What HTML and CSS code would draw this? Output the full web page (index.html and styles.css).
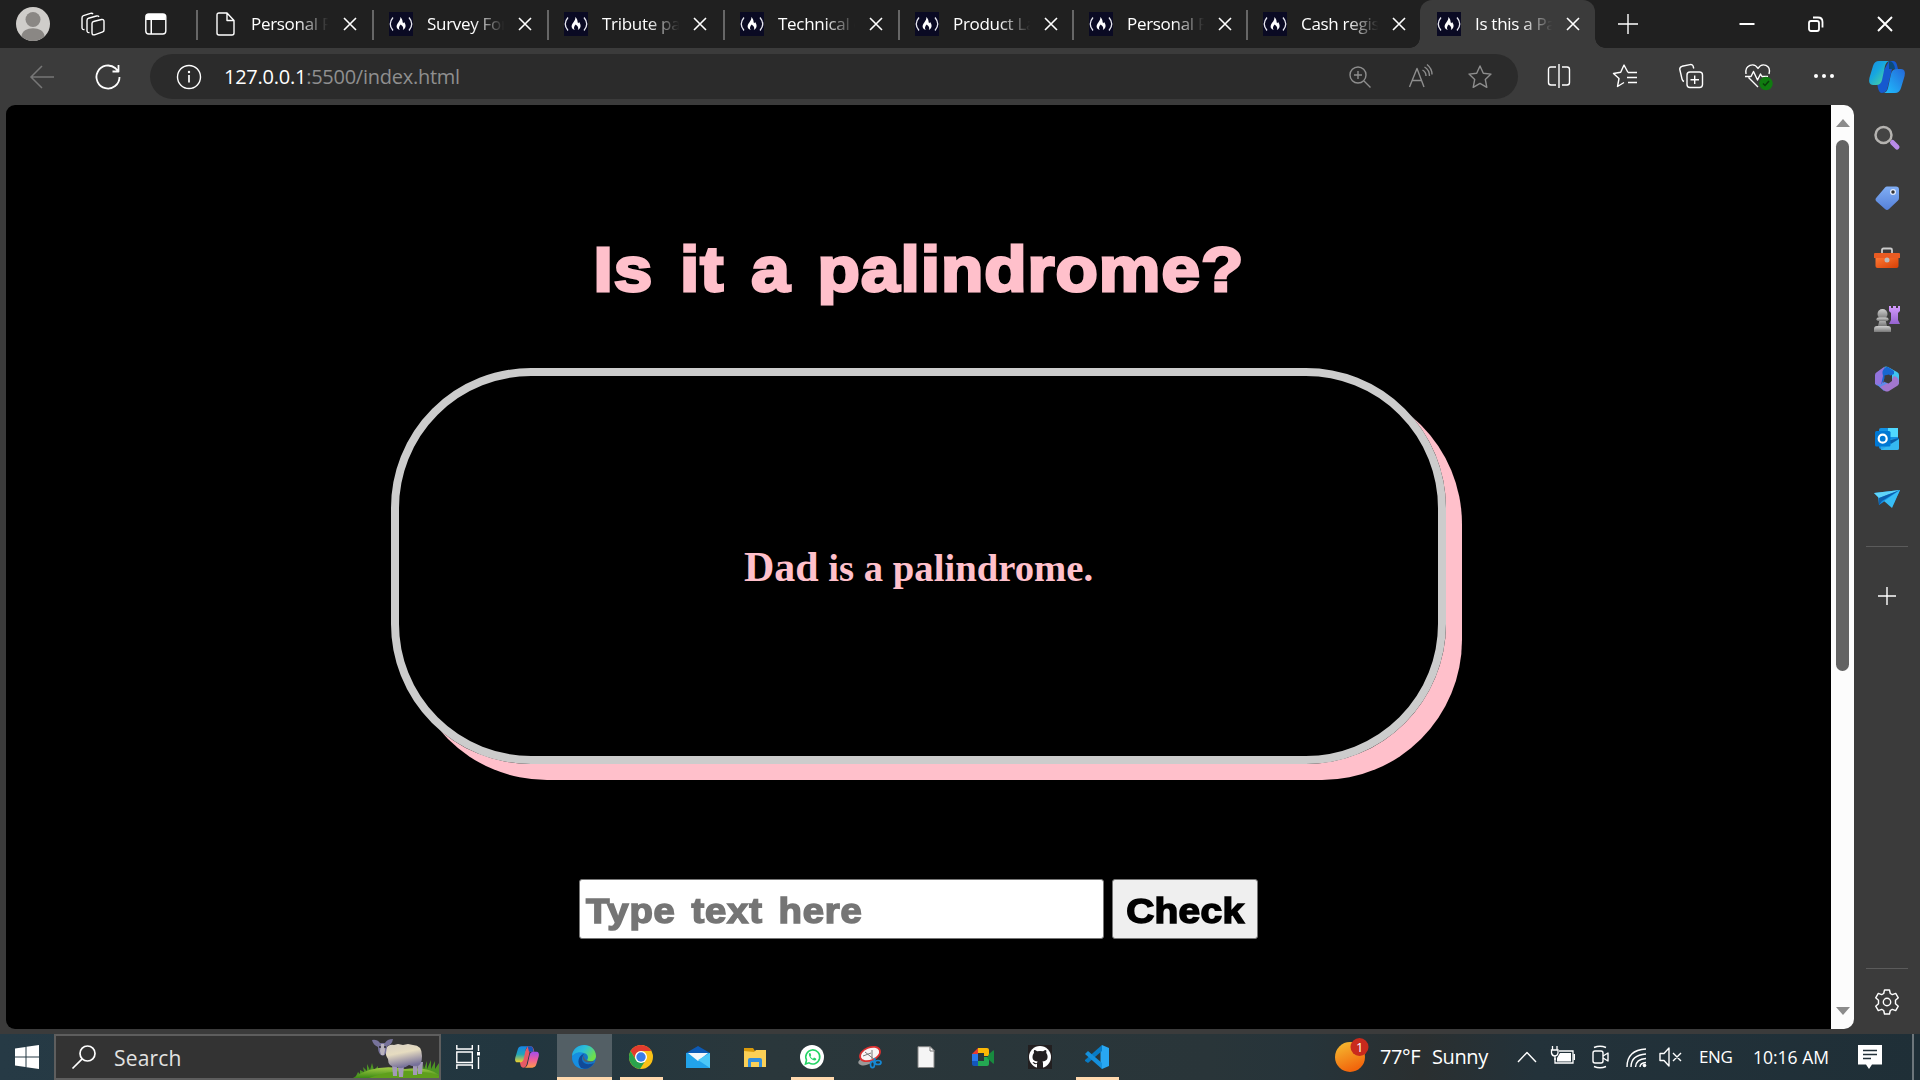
FILE: index.html
```html
<!DOCTYPE html>
<html lang="en">
<head>
<meta charset="utf-8">
<title>Is this a Palindrome?</title>
<link rel="stylesheet" href="styles.css">
</head>
<body>
<svg class="defs" aria-hidden="true">
  <defs>
    <linearGradient id="cyan" x1="0" y1="0" x2="1" y2="1"><stop offset="0" stop-color="#1a8be0"/><stop offset=".4" stop-color="#16a6e0"/><stop offset="1" stop-color="#5be08a"/></linearGradient>
    <linearGradient id="blue" x1="0" y1="1" x2="1" y2="0"><stop offset="0" stop-color="#1fc0ff"/><stop offset="1" stop-color="#2467d8"/></linearGradient>
    <linearGradient id="rainbow" x1="0" y1="0" x2="0" y2="1"><stop offset="0" stop-color="#1684e8"/><stop offset=".5" stop-color="#22a6b8"/><stop offset="1" stop-color="#f5d327"/></linearGradient>
    <linearGradient id="warm" x1="0" y1="0" x2="0" y2="1"><stop offset="0" stop-color="#a04df0"/><stop offset=".5" stop-color="#ee5c9c"/><stop offset="1" stop-color="#ff9a4a"/></linearGradient>
    <linearGradient id="tag" x1="0" y1="0" x2="0" y2="1"><stop offset="0" stop-color="#80aef5"/><stop offset="1" stop-color="#5580d8"/></linearGradient>
    <linearGradient id="orange" x1="0" y1="0" x2="1" y2="1"><stop offset="0" stop-color="#ff7a35"/><stop offset="1" stop-color="#d63f05"/></linearGradient>
    <linearGradient id="sun" x1="0" y1="0" x2=".4" y2="1"><stop offset="0" stop-color="#f5c033"/><stop offset="1" stop-color="#f2660c"/></linearGradient>
    <linearGradient id="grey" x1="0" y1="0" x2="0" y2="1"><stop offset="0" stop-color="#cfcfcf"/><stop offset="1" stop-color="#777"/></linearGradient>
    <linearGradient id="purple" x1="0" y1="0" x2="0" y2="1"><stop offset="0" stop-color="#d59cff"/><stop offset="1" stop-color="#9563d0"/></linearGradient>
    <linearGradient id="wool" x1="0" y1="0" x2=".3" y2="1"><stop offset="0" stop-color="#d8d0c4"/><stop offset=".45" stop-color="#e6dcc0"/><stop offset="1" stop-color="#77719a"/></linearGradient>
    <linearGradient id="grass" x1="0" y1="0" x2="0" y2="1"><stop offset="0" stop-color="#a4cc45"/><stop offset="1" stop-color="#3b8a14"/></linearGradient>
    <linearGradient id="edge" x1="0" y1="0" x2="1" y2=".5"><stop offset="0" stop-color="#1f9fe0"/><stop offset=".5" stop-color="#2dc0d8"/><stop offset="1" stop-color="#6fe04a"/></linearGradient>
    <symbol id="fcc" viewBox="0 0 24 24"><rect width="24" height="24" fill="#0a0a23"/><path d="M4 5.500Q-1.500 12 4 18.500M20 5.500q5.500 6.500 0 13" fill="none" stroke="#e8e8f0" stroke-width="1.300"/><path d="M11.300 5c3 3 1.700 4.500 3 6.300l.8-1.300c2.300 3 2 6.500-1.300 8 .9-2 .2-3.200-.8-4.300l-1.300-1.200c-1.600 1.700-2.400 3.500-1 5.500-4.300-1.600-3.400-5-1.400-7.500 1.500-2 2.300-3.200 2-5.500z" fill="#fff"/></symbol>
    <symbol id="x" viewBox="0 0 14 14"><path d="M1 1l12 12M13 1L1 13" fill="none" stroke="#fff" stroke-width="1.600"/></symbol>
  </defs>
</svg>

<div class="browser">
  <header class="tabstrip">
    <div class="tab-tools">
      <svg class="avatar" viewBox="0 0 34 34"><circle cx="17" cy="17" r="17" fill="#cfcdca"/><circle cx="17" cy="12.500" r="7.500" fill="#8a8784"/><path d="M5.500 29.500c0-11 23-11 23 0a17 17 0 0 1-23 0z" fill="#8a8784"/></svg>
      <svg class="i24" viewBox="0 0 24 24"><g class="line"><path d="M12.500 9.500l8-2q2.500-.4 2.500 2v8.500q0 1.500-1.200 1.800l-8.300 3q-2.500.6-2.500-2V11.500q0-1.700 1.500-2z"/><path d="M8.500 20.500Q6 21 6 18.500V8.500Q6 6.700 7.500 6.300l8-2.300q1.800-.4 2.500.8"/><path d="M3.500 17.500Q1 18 1 15.500V6q0-1.800 1.500-2.300l7-2.300q1.800-.4 2.500.6"/></g></svg>
      <svg class="i24" viewBox="0 0 24 24"><rect x="1.800" y="2" width="20" height="20" rx="3" class="line"/><path d="M2 8V4q0-2 2-2h15.500q2 0 2 2v4zM6.500 8h1.500v14H6.500z" fill="#fff"/></svg>
    </div>
    <nav class="tabs">
      <div class="tab"><svg class="i24" viewBox="0 0 24 24"><path class="line" d="M6 1h8l7 7.500V21q0 2-2 2H6q-2 0-2-2V3q0-2 2-2zM14 1v7.500h7"/></svg><span class="tab-title">Personal P</span><svg class="close"><use href="#x"/></svg></div>
      <div class="tab"><svg class="i24"><use href="#fcc"/></svg><span class="tab-title">Survey For</span><svg class="close"><use href="#x"/></svg></div>
      <div class="tab"><svg class="i24"><use href="#fcc"/></svg><span class="tab-title">Tribute pa</span><svg class="close"><use href="#x"/></svg></div>
      <div class="tab"><svg class="i24"><use href="#fcc"/></svg><span class="tab-title">Technical d</span><svg class="close"><use href="#x"/></svg></div>
      <div class="tab"><svg class="i24"><use href="#fcc"/></svg><span class="tab-title">Product La</span><svg class="close"><use href="#x"/></svg></div>
      <div class="tab"><svg class="i24"><use href="#fcc"/></svg><span class="tab-title">Personal P</span><svg class="close"><use href="#x"/></svg></div>
      <div class="tab"><svg class="i24"><use href="#fcc"/></svg><span class="tab-title">Cash regis</span><svg class="close"><use href="#x"/></svg></div>
      <div class="tab active"><svg class="i24"><use href="#fcc"/></svg><span class="tab-title">Is this a Pa</span><svg class="close"><use href="#x"/></svg></div>
    </nav>
    <svg class="newtab" viewBox="0 0 22 22"><path class="line" d="M11 1v20M1 11h20"/></svg>
    <div class="window-buttons">
      <svg class="i24" viewBox="0 0 24 24"><path d="M4.500 12h15" stroke="#fff" stroke-width="2"/></svg>
      <svg class="i24" viewBox="0 0 24 24"><g fill="none" stroke="#fff" stroke-width="1.800"><rect x="5" y="9" width="10" height="10" rx="2"/><path d="M9 5.500h5q4.500 0 4.500 4.500v5.500"/></g></svg>
      <svg class="i24" viewBox="0 0 24 24"><path d="M5 5l14 14M19 5L5 19" stroke="#fff" stroke-width="1.900"/></svg>
    </div>
  </header>

  <div class="toolbar">
    <svg class="i26 back" viewBox="0 0 26 26"><path d="M25 13H2M13 2L2 13l11 11" fill="none" stroke="#777" stroke-width="1.500"/></svg>
    <svg class="i26" viewBox="0 0 26 26"><path class="line thick" d="M24.500 13a11.500 11.500 0 1 1-4-8.700l2.500 2.500M23.500 1v6.500h-6"/></svg>
    <div class="address">
      <svg class="i26" viewBox="0 0 26 26"><circle cx="13" cy="13" r="11.500" class="line"/><path d="M13 11v7.500" stroke="#fff" stroke-width="1.700"/><circle cx="13" cy="8" r="1.200" fill="#fff"/></svg>
      <span class="url"><b>127.0.0.1</b>:5500/index.html</span>
      <div class="address-icons">
        <svg class="i24" viewBox="0 0 24 24"><g class="dim"><circle cx="10" cy="10" r="8"/><path d="M16 16l6.500 6.500M10 6v8M6 10h8"/></g></svg>
        <svg class="i24" viewBox="0 0 24 24"><g class="dim"><path d="M1.500 22L9 3.500l7 18.500M4.500 15.500h9M14.500 5q3.500 2 3.500 6M16.500 2q5 3 5 9M19-.5q5 4 5 10"/></g></svg>
        <svg class="i24" viewBox="0 0 24 24"><path class="dim" d="M12 1l3.300 7.200 7.700.9-5.700 5.300 1.500 7.900-6.800-3.900-6.800 3.900 1.500-7.900L1 9.100l7.700-.9z"/></svg>
      </div>
    </div>
    <div class="tools">
      <svg class="i24" viewBox="0 0 24 24"><path class="line" d="M9 3H4Q1.500 3 1.500 5.500v13Q1.500 21 4 21h5M15 3h5q2.500 0 2.500 2.500v13Q22.500 21 20 21h-5M12 0v24"/></svg>
      <svg class="i24" viewBox="0 0 24 24"><path class="line" d="M15 8.500L11 1 7.700 8.200.5 9.500l5.500 5-1.500 8 6.500-4M15 8.500h9M14 13.500h10M15 18.500h9"/></svg>
      <svg class="i24" viewBox="0 0 24 24"><g class="line"><rect x="8" y="8" width="15.500" height="15.500" rx="3"/><path d="M15.700 11.500v8.500M11.500 15.700H20M5 17.500Q3.500 17 3 15L.8 5.500Q.5 3 3 2.300L11 .6q3-.4 3.300 2.400l.5 1.500"/></g></svg>
      <svg class="heart" viewBox="0 0 28 26"><path class="line" d="M1 10C-.5 1 9-2 13 4.500 17-2 26.500 1 24 10M3.500 13.500L13 23M0 12.500h6l2.500-5 4 8.500 3-6 1.500 2.500h6"/><circle cx="21" cy="19.500" r="6.700" fill="#107c10"/><path d="M18 19.500l2 2 4-4.500" fill="none" stroke="#0a3d0a" stroke-width="1.500"/></svg>
      <svg class="i24" viewBox="0 0 24 24"><g fill="#fff"><circle cx="4" cy="12" r="2"/><circle cx="12" cy="12" r="2"/><circle cx="20" cy="12" r="2"/></g></svg>
    </div>
    <svg class="copilot" viewBox="0 0 36 32"><path d="M20 0h4q3 0 4 4l1 4h-6l-4 17q-1 7-6 7-3 0-4-5l-1-5z" fill="#1659cf"/><path d="M20 0q5 0 6 8h-6z" fill="#0c4a78"/><path d="M10 0h10q-3 1-4 5l-3 14q-1 5-6 5H4q-5 0-3.600-7L4 5Q5.500 0 10 0z" fill="url(#cyan)"/><path d="M26 32H15q3-1 4-5l3-14q1-5 6-5h4q5 0 3.600 7L32 27q-1.500 5-6 5z" fill="url(#blue)"/></svg>
  </div>

  <div class="content">
    <main class="page">
      <h1 class="title"><span>Is it a palindrome?</span></h1>
      <section class="result"><p><span class="word">Dad</span> is a palindrome.</p></section>
      <form class="form">
        <div class="field"><span>Type text here</span></div>
        <div class="button"><span>Check</span></div>
      </form>
    </main>
    <div class="scrollbar"><i class="arrow up"></i><i class="thumb"></i><i class="arrow down"></i></div>
    <aside class="sidebar">
      <svg viewBox="0 0 26 26"><path d="M18.500 17.500l4.500 4.500" stroke="#b98be8" stroke-width="5" stroke-linecap="round"/><circle cx="9.500" cy="10" r="8" fill="#444" stroke="#b5b3b0" stroke-width="2.500"/></svg>
      <svg viewBox="0 0 26 26"><path d="M13 1.500h9q3 0 3 3v8.500q0 1.500-1 2.500L15 24q-2 2-4 0l-8.500-7.500q-2-2 0-4L11 2.500q.8-1 2-1z" fill="url(#tag)"/><circle cx="19" cy="7" r="2.400" fill="#333" stroke="#e4edff" stroke-width="1.300"/></svg>
      <svg viewBox="0 0 26 26"><path d="M8 8V5q0-1.500 1.500-1.500h7Q18 3.500 18 5v3" fill="none" stroke="#ccc" stroke-width="1.800"/><path d="M1.500 12h23v9q0 2-2 2h-19q-2 0-2-2z" fill="url(#orange)"/><path d="M1 8h24q1 0 1 1v4H0V9q0-1 1-1z" fill="#e85b22"/><circle cx="13" cy="15" r="2.500" fill="#bbb"/></svg>
      <svg viewBox="0 0 26 26"><path d="M15 0h2v2h2V0h3v2h2V0h2v5l-2 2v7l2 4H15l2-4V7l-2-2z" fill="url(#purple)"/><g fill="url(#grey)"><path d="M6 12h5l2 8H4z"/><circle cx="8.500" cy="8" r="5"/><rect x="2.500" y="11.500" width="12" height="3.500" rx="1.700"/><path d="M0 26v-3q0-3 3-3h11q3 0 3 3v3z"/></g></svg>
      <svg viewBox="0 0 26 26"><path d="M10 1q2-1 4 0l9 5q2 1 2 3v9l-7-3V9z" fill="#3fc4f0"/><path d="M10 1l6 6-6 3-1 9q-6 2-8-1V9q0-2 2-3z" fill="#9273dc"/><path d="M14 1h-2q-5 3-3 9l-2 9 4-7 9-4V5z" fill="#1767cf"/><path d="M1 17q5 4 9-1l8-4v6l-8 7z" fill="#5a8bea"/><path d="M25 16q0 3-2 4l-8 5q-2 1-4 0l-5-4 10-5 4-6q5 1 5 6z" fill="#a276ce"/><path d="M10.500 9.500l4.500-1 3 3v3.500l-3.500 2.500-4-1.500z" fill="#3b3b3b"/></svg>
      <svg viewBox="0 0 26 26"><rect x="5" y="2" width="19" height="21" rx="2" fill="#1391e4"/><path d="M14 2h10v9H14z" fill="#50d9ff"/><path d="M6 13h19v9q0 2-2 2H7z" fill="#28a8ea"/><path d="M25 12v10L12 15z" fill="#0a5ea8"/><path d="M25 13v9q0 2-2 2H7l18-11z" fill="#35b8f1"/><rect x="1" y="5" width="15.500" height="15.500" rx="1.500" fill="#0078d4"/><circle cx="8.700" cy="12.700" r="4" fill="none" stroke="#fff" stroke-width="2.200"/></svg>
      <svg viewBox="0 0 26 26"><path d="M0 7l26-3-8 17-7-6-6 4-1-8z" fill="#1593e6"/><path d="M0 7l26-3L5 12z" fill="#5fd5fa"/><path d="M5 12L26 4 8 15l-3 4z" fill="#0c5fae"/><path d="M26 4l-8 18-8-7z" fill="#38bdf5"/></svg>
      <i class="rule"></i>
      <svg class="plus" viewBox="0 0 22 22"><path class="line" d="M11 2v18M2 11h18"/></svg>
      <i class="rule bottom"></i>
      <svg class="gear" viewBox="0 0 26 26"><path class="line" d="M10.500 1h5l.8 3.500 2 1.100 3.400-1.200 2.600 4.400-2.800 2.500v3.400l2.800 2.500-2.600 4.400-3.400-1.200-2 1.100-.8 3.500h-5l-.8-3.500-2-1.100-3.400 1.200-2.600-4.400 2.800-2.500v-3.400L1.700 8.800l2.600-4.400 3.400 1.200 2-1.100z"/><circle cx="13" cy="13" r="3.700" class="line"/></svg>
    </aside>
  </div>
</div>

<footer class="taskbar">
  <div class="start"><svg viewBox="0 0 24 24"><path fill="#fff" d="M0 3.500L10.500 2v9.500H0zM11.500 1.800L24 0v11.500H11.500zM0 12.500h10.500V22L0 20.500zM11.500 12.500H24V24l-12.500-1.800z"/></svg></div>
  <div class="search">
    <svg class="i24" viewBox="0 0 24 24"><circle cx="15.500" cy="8.500" r="7.500" fill="none" stroke="#fff" stroke-width="1.700"/><path d="M10.200 13.800L.5 23.500" stroke="#fff" stroke-width="1.700"/></svg>
    <span>Search</span>
    <svg class="sheep" viewBox="0 0 88 42"><path d="M4 42l3-6 2 2 0-4 4 2-1-5 4 4 0-7 3 6 2-7 2 7 4-4v12zM70 36l2-8 1 5 3-8 0 8 4-9 0 9 4-8 0 8 4-6v15H70z" fill="#4d9424"/><path d="M2 42Q24 27 54 33q22-3 34 6v3z" fill="url(#grass)"/><path d="M18 42q26-11 62-5l8 3v2z" fill="#5f9f1c"/><path d="M41 28h5v12h-4zM47 29h6l-1 12h-4zM62 27h5l-1 12h-4zM67 26h5l-1 12h-4z" fill="#a39ab6"/><path d="M35 13q2-5 8-4l4-1 5 1 5-1 5 1q9 0 9 11 0 8-4 10-5 1-9-1-6 5-13 2-8 0-8-8-3-4-2-10z" fill="url(#wool)"/><path d="M21 4q5-1 8 3l5 0q2-4 8-4-1 6-6 7l-1 7q-2 4-5 2-3-2-3-8-5-2-6-7z" fill="#77739b"/><path d="M30 8h3l1 6-1 5h-3l-1-4z" fill="#b9b3bd"/><circle cx="29" cy="11" r=".9" fill="#222"/><circle cx="34" cy="11" r=".9" fill="#222"/></svg>
  </div>
  <div class="apps">
    <div class="app task"><svg viewBox="0 0 24 24"><path d="M.8 0v4h15.500V0M.8 24v-4h15.500v4M.8 7h15.500v10.500H.8zM22.500 0v6M22.500 12v12" fill="none" stroke="#fff" stroke-width="1.400"/><path fill="#fff" d="M21 7h3v3.500h-3z"/></svg></div>
    <div class="app"><svg viewBox="0 0 36 34"><path d="M19 1h5q3 0 4 4l1 4h-7l-4 17q-1 7-6 7-3 0-4-5l-1-5z" fill="#e85a64"/><path d="M19 1h5q3 0 4 8h-7z" fill="#1757b8"/><path d="M10 1h10q-3 1-4 5l-3 14q-1 5-6 5H4q-5 0-3.600-7L4 6q1.500-5 6-5z" fill="url(#rainbow)"/><path d="M26 33H15q3-1 4-5l3-14q1-5 6-5h4q5 0 3.600 7L32 28q-1.500 5-6 5z" fill="url(#warm)"/></svg></div>
    <div class="app current"><svg viewBox="0 0 24 24"><circle cx="12" cy="12" r="12" fill="#1375c8"/><path d="M0 11C1-3 23-4 24 11c0 6-8 7-9 4 2-2 1-7-4-7-6 0-9 2-11 3z" fill="url(#edge)"/><path d="M8 15c0-4 2-7 4-7-6-2-11 1-12 4 0 7 5 12 12 12-3-2-4-5-4-9z" fill="#168ee0"/><path d="M12 9c-5 6 0 13 10 9-3 5-8 7-13 5-5-6-2-13 3-14z" fill="#114a98"/><path d="M12.500 10c-1.500 3 .5 7 9.500 6-5 3-11 1-11-3 0-1 .7-2 1.500-3z" fill="#536068"/></svg></div>
    <div class="app open"><svg viewBox="0 0 24 24"><circle cx="12" cy="12" r="12" fill="#fbc116"/><path d="M1.600 6A12 12 0 0 1 22.400 6H12a6 6 0 0 0-5.500 8z" fill="#e33b2e"/><path d="M1.600 6A12 12 0 0 0 11 24l5.500-8.500A6 6 0 0 1 7 15z" fill="#2ba24c"/><circle cx="12" cy="12" r="6" fill="#fff"/><circle cx="12" cy="12" r="4.700" fill="#3a7de8"/></svg></div>
    <div class="app"><svg viewBox="0 0 24 24"><path d="M0 8l12-7 12 7v5H0z" fill="#0d5ab5"/><path d="M0 8h24v15H0z" fill="#22a3ea"/><path d="M2 8h20L12 16z" fill="#f5f7fa"/><path d="M24 8v15L12 15z" fill="#4cc8f8"/></svg></div>
    <div class="app"><svg viewBox="0 0 24 24"><path d="M1 3h9l2 3v3H1z" fill="#d99a0b"/><path d="M1 6l10 1 2-2h10v17H1z" fill="#fbd056"/><path d="M5 22v-7q0-2 2-2h10q2 0 2 2v7h-3v-5H8v5z" fill="#338edb"/></svg></div>
    <div class="app open"><svg viewBox="0 0 24 24"><circle cx="12" cy="12" r="12" fill="#fff"/><path d="M5.500 19l1-4A7 7 0 1 1 9 17.800z" fill="none" stroke="#25d366" stroke-width="1.600"/><path d="M9.500 8c-2 1 1 7 5 7.500 2 0 2-1.500 1.500-2l-2-1-1 1.200c-1.500-.5-2-1.500-2.500-2.500l.7-1-.7-2z" fill="#25d366"/></svg></div>
    <div class="app"><svg viewBox="0 0 24 24"><ellipse cx="9" cy="16" rx="8" ry="4" fill="#999" transform="rotate(-15 9 16)"/><ellipse cx="13" cy="9" rx="10.500" ry="6.500" fill="#f8f5f5" stroke="#dc3030" stroke-width="1.800" transform="rotate(-22 13 9)"/><path d="M8 7l10 8M15 5v9M6 11l8-3" stroke="#777" fill="none"/><g fill="none" stroke="#1688d4" stroke-width="1.700"><ellipse cx="15.500" cy="19.500" rx="2" ry="3.200"/><ellipse cx="21" cy="17.500" rx="3" ry="2"/><path d="M18 13l-1 5"/></g></svg></div>
    <div class="app"><svg viewBox="0 0 24 24"><path d="M4 1.700h12l4 4V22.500H4z" fill="#f5f5f5" stroke="#888"/><path d="M16 1.500V6h4.500z" fill="#fff" stroke="#777"/></svg></div>
    <div class="app"><svg viewBox="0 0 24 24"><path d="M7 3h9q2 0 2 2v6h-5V8H7z" fill="#fbb806"/><path d="M7 3v6H1z" fill="#e53b30"/><path d="M1 9h6v7H1z" fill="#2978ec"/><path d="M1 16h6v5H3q-2 0-2-2z" fill="#1455bb"/><path d="M7 16h6v-4h5v7q0 2-2 2H7z" fill="#24a852"/><path d="M18 9l4-3.500q1-.7 1 .7v11.600q0 1.400-1 .7L16 13z" fill="#188a3f"/></svg></div>
    <div class="app"><svg viewBox="0 0 24 24"><rect width="24" height="24" fill="#221f20"/><circle cx="12" cy="12" r="11" fill="#fff"/><path d="M9 23v-4c-3 .7-3.500-1-4.500-2 2-.5 2 1.800 4.500 1l.6-1.500C2 16 5 8.500 6 8c-.4-1-.2-2 .1-3 1 0 2 .5 3 1.300q3-.7 6 0c1-.8 2-1.300 3-1.300.3 1 .5 2 .1 3 1 .5 4 8-3.700 8.500q.7 1 .5 2.500v4z" fill="#221f20"/></svg></div>
    <div class="app open"><svg viewBox="0 0 24 24"><path d="M17 0l7 3v18l-7 3-1.500-6V6z" fill="#28a7f2"/><path d="M17 0v6L3 18l-3-2v-1z" fill="#087bc4"/><path d="M0 9l3-3 14 12v6L0 9z" fill="#1590dc"/></svg></div>
  </div>
  <div class="tray">
    <svg class="weather" viewBox="0 0 34 34"><ellipse cx="15" cy="19" rx="15" ry="15" fill="url(#sun)"/><circle cx="24.500" cy="9" r="9" fill="#c92a1d"/><text x="24.500" y="14" text-anchor="middle" class="badge">1</text></svg>
    <span class="temp">77°F</span><span class="sunny">Sunny</span>
    <svg class="i24 chev" viewBox="0 0 24 24"><path class="line" d="M3 17l9-9.500 9 9.500"/></svg>
    <svg class="i24 batt" viewBox="0 0 24 24"><path d="M8 6h14v12H4v-5" fill="none" stroke="#fff" stroke-width="1.300"/><path d="M9 8h11v8.500H6V13zM22.500 9H24v6h-1.500z" fill="#fff"/><path d="M1.500 1v4M6 1v4M.5 5h6.500v3q-.5 3-3.200 3T.5 8zM4 11v4" stroke="#fff" fill="none" stroke-width="1.300"/></svg>
    <svg class="i24 cam" viewBox="0 0 24 24"><g class="line"><rect x="5" y="6" width="10" height="12" rx="2"/><path d="M15 11l5-3v8l-5-3M6 2.500q6-2.500 12 0M6 21.500q6 2.500 12 0"/></g></svg>
    <svg class="i24 wifi" viewBox="0 0 24 24"><path class="line" d="M3 22Q3 5 22 4M7 22Q7 10 22 9M11.500 22Q12 14 22 13.500M16 22q0-4 6-4.500"/><circle cx="20.500" cy="20.500" r="1.800" fill="#fff"/></svg>
    <svg class="i24 vol" viewBox="0 0 24 24"><path class="line" d="M2 8.500h4L11 3v18l-5-5.500H2zM15 8l8 8M23 8l-8 8"/></svg>
    <span class="lang">ENG</span><span class="clock">10:16 AM</span>
    <svg class="notif" viewBox="0 0 24 24"><path d="M0 0h24v19.500H14L11 24l-3-4.500H0z" fill="#fff"/><path d="M5 5.500h14M5 9.500h14M5 13.500h8" stroke="#223038" stroke-width="1.300"/></svg>
    <i class="desktop"></i>
  </div>
</footer>
</body>
</html>
```

FILE: styles.css
```css
* { box-sizing: border-box; }
body { margin: 0; width: 1920px; height: 1080px; overflow: hidden; background: #3b3b3b; font-family: "Open Sans", "Noto Sans", sans-serif; color: #fff; display: flex; flex-direction: column; }
svg { display: block; flex: none; overflow: visible; }
.defs { position: absolute; width: 0; height: 0; }
.line { fill: none; stroke: #fff; stroke-width: 1.400; stroke-linejoin: round; }
.thick { stroke-width: 1.800; }
.dim { fill: none; stroke: #8e8e8e; stroke-width: 1.400; stroke-linejoin: round; }
.i24 { width: 24px; height: 24px; }
.i26 { width: 26px; height: 26px; }

.browser { height: 1034px; display: flex; flex-direction: column; }
.tabstrip { height: 48px; background: #202020; display: flex; align-items: center; }
.tab-tools { width: 196px; padding-left: 16px; display: flex; align-items: center; }
.avatar { width: 34px; height: 34px; }
.avatar + svg { margin-left: 31px; }
.avatar + svg + svg { margin-left: 39px; }
.tabs { display: grid; grid-template-columns: 176px 175px 176px 175px 174px 174px 174px 175px; height: 48px; }
.tab { display: flex; align-items: center; padding-left: 17px; position: relative; background: linear-gradient(#666, #666) 0 10px / 2px 30px no-repeat; }
.tab-title { width: 79px; margin-left: 14px; font-size: 17px; letter-spacing: -.3px; line-height: 24px; white-space: nowrap; -webkit-mask-image: linear-gradient(90deg, #000 58%, transparent 98%); mask-image: linear-gradient(90deg, #000 58%, transparent 98%); }
.close { width: 14px; height: 14px; margin-left: 12px; }
.tab:first-child .close { margin-left: 13px; }
.tab.active { background: #3b3b3b; border-radius: 12px 12px 0 0; }
.tab.active::before, .tab.active::after { content: ""; position: absolute; bottom: 0; width: 10px; height: 10px; }
.tab.active::before { left: -10px; background: radial-gradient(circle at 0 0, transparent 9.5px, #3b3b3b 10px); }
.tab.active::after { right: -10px; background: radial-gradient(circle at 100% 0, transparent 9.5px, #3b3b3b 10px); }
.newtab { width: 22px; height: 22px; margin-left: 22px; }
.window-buttons { margin-left: auto; padding-right: 23px; display: flex; gap: 45px; }

.toolbar { height: 57px; display: flex; align-items: center; padding-left: 29px; }
.toolbar > .i26 { margin-right: 40px; }
.toolbar > .i26 + .i26 { margin-right: 29px; }
.address { width: 1368px; height: 45px; border-radius: 23px; background: #2b2b2b; display: flex; align-items: center; padding: 0 26px; }
.url { margin-left: 22px; font-size: 20px; letter-spacing: -.25px; line-height: 28px; color: #8f8f8f; }
.url b { font-weight: 400; color: #fff; }
.address-icons { margin-left: auto; display: flex; gap: 36px; }
.tools { display: flex; gap: 42px; margin-left: 29px; }
.heart { width: 28px; height: 26px; margin-right: -3px; }
.copilot { width: 36px; height: 32px; margin-left: 33px; margin-top: 1px; }

.content { height: 924px; display: flex; padding-left: 6px; }
.page { width: 1825px; background: #000; border-radius: 9px 0 0 9px; display: flex; flex-direction: column; align-items: center; }
.title { margin: 122px 0 0; height: 84px; font: 700 63px/84px "Liberation Sans", Arial, sans-serif; color: pink; white-space: nowrap; }
.title span, .field span, .button span { display: inline-block; }
.title span { transform: scaleX(1.1); -webkit-text-stroke: 2.800px pink; letter-spacing: .9px; word-spacing: 6px; }
.result { margin-top: 57px; width: 1055px; height: 396px; border: 8px solid #ccc; border-radius: 140px; box-shadow: 16px 16px 0 pink; display: flex; align-items: center; justify-content: center; }
.result p { margin: 0; padding-top: 2px; font: 700 38.700px/48px "Liberation Serif", "Times New Roman", serif; color: pink; }
.word { font-size: 42px; }
.form { margin-top: 115px; display: flex; gap: 8px; font: 700 34.500px/60px "Liberation Sans", Arial, sans-serif; }
.field, .button { height: 60px; border: 1px solid #767676; border-radius: 3px; white-space: nowrap; }
.field { width: 525px; background: #fff; color: #757575; padding: 1px 0 0 6px; }
.button { width: 146px; background: #efefef; color: #000; text-align: center; padding-top: 1px; }
.field span { transform: scaleX(1.11); transform-origin: 0 0; -webkit-text-stroke: 1.500px #757575; letter-spacing: .7px; word-spacing: 4px; }
.button span { transform: scaleX(1.13); -webkit-text-stroke: 1.500px #000; letter-spacing: .2px; }

.scrollbar { width: 23px; background: #fcfcfc; border-radius: 0 10px 10px 0; display: flex; flex-direction: column; align-items: center; padding: 14px 0; }
.arrow { width: 0; height: 0; border: 7.500px solid transparent; }
.up { border-top: 0; border-bottom: 8px solid #8b8b8b; }
.down { border-bottom: 0; border-top: 8px solid #8b8b8b; margin-top: auto; }
.thumb { width: 13px; height: 531px; margin-top: 13px; border-radius: 7px; background: #636363; }

.sidebar { width: 66px; display: flex; flex-direction: column; align-items: center; padding: 20px 0 14px; gap: 34.200px; }
.sidebar svg { width: 26px; height: 26px; }
.rule { width: 42px; height: 1px; background: #5b5b5b; }
.sidebar .plus { width: 22px; height: 22px; margin-top: 3px; }
.rule.bottom { margin-top: auto; margin-bottom: -14px; }

.taskbar { height: 46px; display: flex; background: linear-gradient(90deg, #263a45 0, #22363f 27%, #2a373b 40%, #293539 63%, #26343a 68%, #2a2f30 74%, #23323a 80%, #1f2f37 100%); }
.start { width: 54px; padding: 11px 15px; }
.start svg { width: 24px; height: 24px; }
.search { width: 387px; background: #333; border: 2px solid #5e5e5e; display: flex; align-items: center; padding-left: 16px; font-size: 21px; color: #e2e2e2; }
.search span { margin-left: 18px; line-height: 28px; padding-top: 2px; letter-spacing: .2px; }
.sheep { width: 88px; height: 42px; margin-left: auto; }
.apps { display: flex; }
.app { width: 57px; padding: 11px 0 0 16px; height: 46px; }
.app svg { width: 24px; height: 24px; }
.app.task { width: 58px; padding-left: 15px; }
.current { width: 55px; margin-left: 1px; margin-right: 1px; padding-left: 15px; background: linear-gradient(#ffd9ae, #ffd9ae) 0 100% / 100% 3px no-repeat, #535f65; }
.open { background: linear-gradient(#ffd9ae, #ffd9ae) 7px 100% / 43px 3px no-repeat; }
.tray { margin-left: auto; display: flex; align-items: center; font-size: 17px; letter-spacing: -.4px; line-height: 24px; }
.tray span { white-space: nowrap; }
.weather { width: 34px; height: 34px; margin: -4px 11px 0 0; }
.badge { font: 13px "Open Sans", sans-serif; fill: #fff; }
.tray .temp, .tray .sunny { font-size: 20px; line-height: 28px; }
.temp { width: 52px; }
.sunny { width: 83px; }
.batt { margin-left: 12px; }
.cam { margin-left: 13px; }
.wifi { margin-left: 12px; }
.vol { margin-left: 10px; }
.lang { width: 54px; margin-left: 17px; }
.clock { width: 105px; font-size: 17.500px; letter-spacing: 0; }
.notif { width: 24px; height: 24px; }
.desktop { width: 2px; height: 46px; background: #6d767b; margin: 0 6px 0 30px; }
```
